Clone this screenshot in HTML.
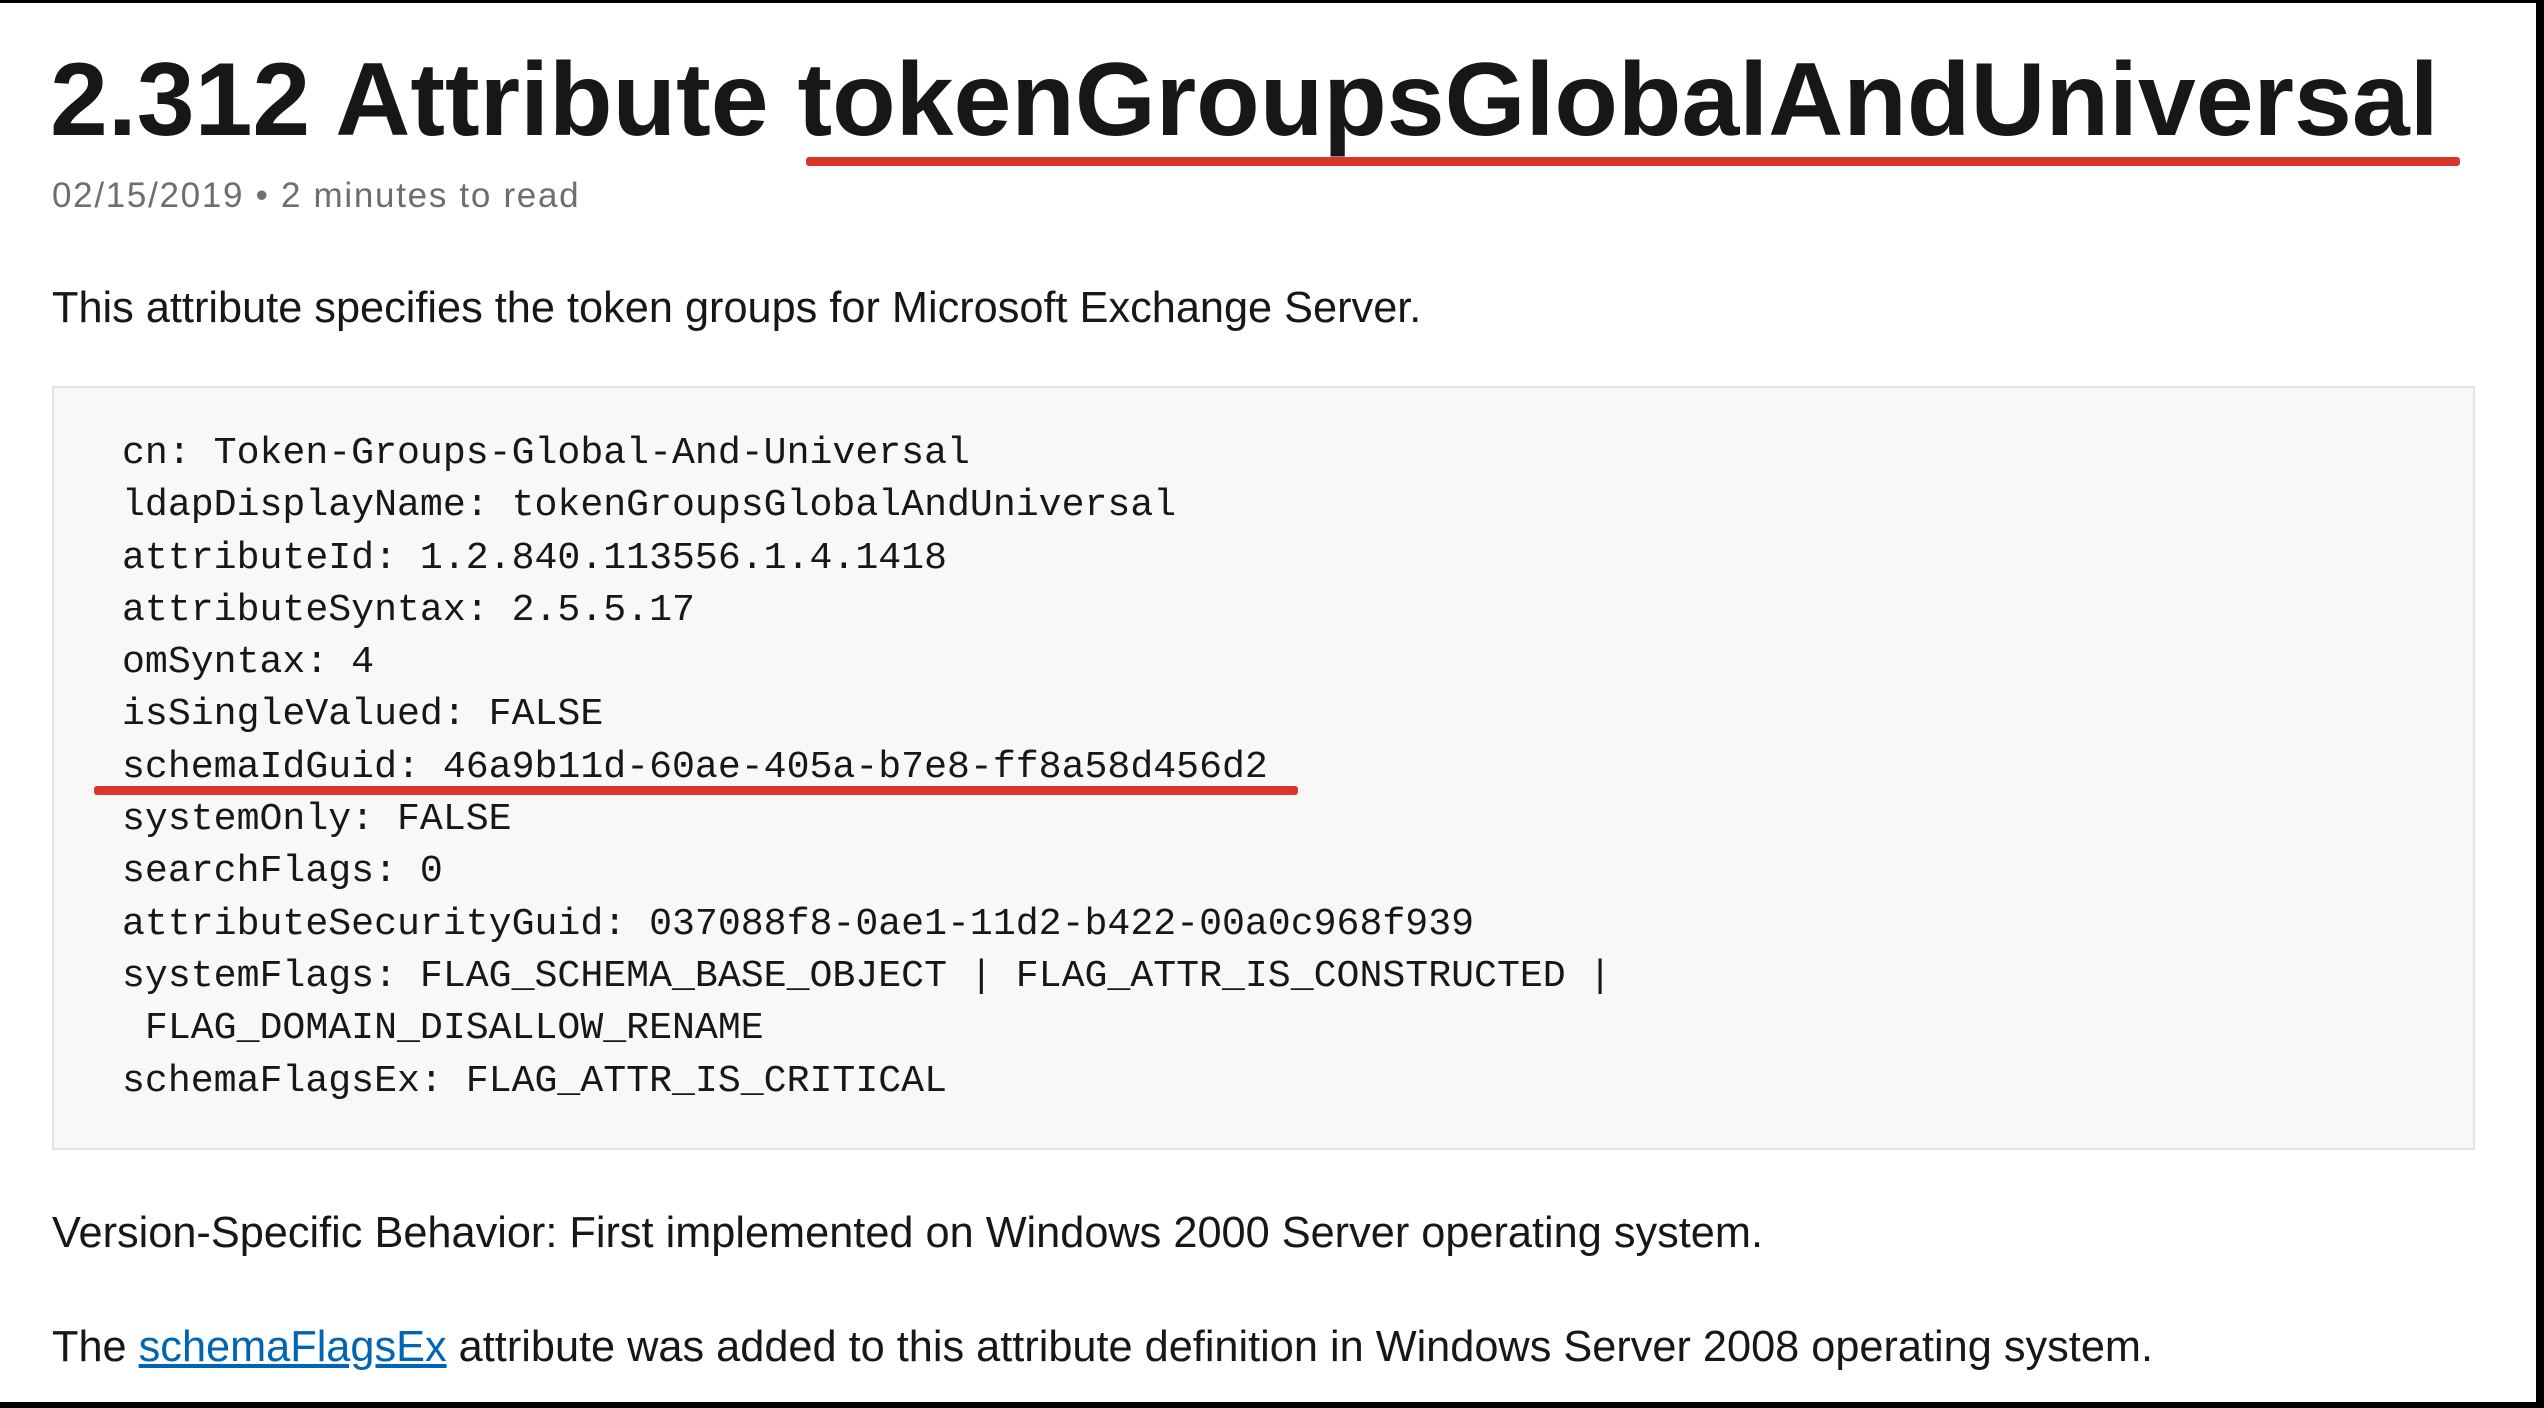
<!DOCTYPE html>
<html><head><meta charset="utf-8"><style>
html,body{margin:0;padding:0;background:#fff;}
body{width:2544px;height:1408px;position:relative;overflow:hidden;font-family:"Liberation Sans",sans-serif;color:#171717;}
.a{position:absolute;white-space:pre;}
h1{position:absolute;left:50px;top:30px;margin:0;font-size:104px;font-weight:bold;line-height:140px;white-space:pre;color:#171717;}
.meta{left:52px;top:176px;font-size:35px;letter-spacing:1.7px;color:#6e6e6e;line-height:40px;}
.p{left:52px;font-size:43.3px;line-height:50px;}
.code{position:absolute;left:52px;top:386px;width:2423px;height:764px;background:#f8f8f8;border:2px solid #e3e3e3;box-sizing:border-box;}
.code pre{position:absolute;left:68px;top:40px;margin:0;font-family:"Liberation Mono","DejaVu Sans Mono",monospace;font-size:38.2px;line-height:52.3px;color:#171717;}
.red{position:absolute;background:#d9362b;border-radius:3px;}
a{color:#0065b3;text-decoration:underline;}
</style></head><body>
<div style="position:absolute;left:0;top:0;width:2544px;height:3px;background:#000"></div>
<div style="position:absolute;left:2536px;top:0;width:8px;height:1408px;background:#000"></div>
<div style="position:absolute;left:0;top:1402px;width:2544px;height:6px;background:#000"></div>
<h1>2.312 Attribute tokenGroupsGlobalAndUniversal</h1>
<div class="red" style="left:806px;top:157px;width:1654px;height:9px"></div>
<div class="a meta">02/15/2019 • 2 minutes to read</div>
<div class="a p" style="top:283px">This attribute specifies the token groups for Microsoft Exchange Server.</div>
<div class="code"><pre>cn: Token-Groups-Global-And-Universal
ldapDisplayName: tokenGroupsGlobalAndUniversal
attributeId: 1.2.840.113556.1.4.1418
attributeSyntax: 2.5.5.17
omSyntax: 4
isSingleValued: FALSE
schemaIdGuid: 46a9b11d-60ae-405a-b7e8-ff8a58d456d2
systemOnly: FALSE
searchFlags: 0
attributeSecurityGuid: 037088f8-0ae1-11d2-b422-00a0c968f939
systemFlags: FLAG_SCHEMA_BASE_OBJECT | FLAG_ATTR_IS_CONSTRUCTED |
 FLAG_DOMAIN_DISALLOW_RENAME
schemaFlagsEx: FLAG_ATTR_IS_CRITICAL</pre></div>
<div class="red" style="left:94px;top:786px;width:1204px;height:9px"></div>
<div class="a p" style="top:1208px">Version-Specific Behavior: First implemented on Windows 2000 Server operating system.</div>
<div class="a p" style="top:1322px">The <a>schemaFlagsEx</a> attribute was added to this attribute definition in Windows Server 2008 operating system.</div>
</body></html>
